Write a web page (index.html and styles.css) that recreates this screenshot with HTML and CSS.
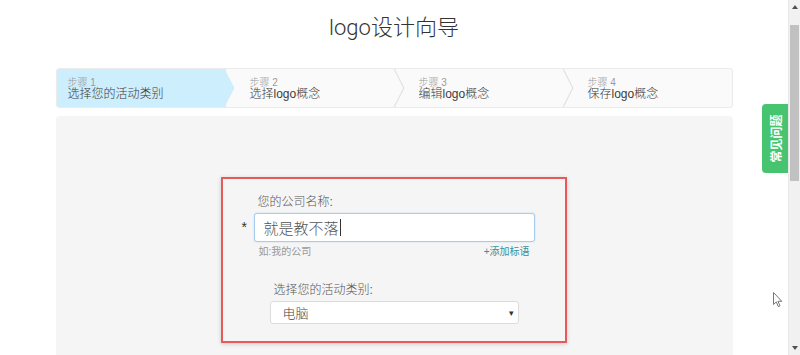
FILE: index.html
```html
<!DOCTYPE html>
<html lang="zh">
<head>
<meta charset="utf-8">
<title>logo设计向导</title>
<link rel="stylesheet" href="styles.css">
</head>
<body>
<div class="screen">
  <div class="page">
    <h1 class="title">logo设计向导</h1>
    <div class="container">
      <ol class="steps">
        <li class="step active"><span class="step-num">步骤 1</span><span class="step-name">选择您的活动类别</span></li>
        <li class="step"><span class="step-num">步骤 2</span><span class="step-name">选择logo概念</span></li>
        <li class="step"><span class="step-num">步骤 3</span><span class="step-name">编辑logo概念</span></li>
        <li class="step last"><span class="step-num">步骤 4</span><span class="step-name">保存logo概念</span></li>
      </ol>
      <div class="panel">
        <div class="form-box">
          <div class="field">
            <label class="field-label">您的公司名称:</label>
            <div class="input-row">
              <span class="required">*</span>
              <div class="input"><span class="input-text">就是教不落</span><span class="caret"></span></div>
            </div>
            <div class="hint-row">
              <span class="hint">如:我的公司</span>
              <span class="add-slogan">+添加标语</span>
            </div>
          </div>
          <div class="select-field">
            <label class="field-label">选择您的活动类别:</label>
            <div class="select"><span>电脑</span><span class="select-arrow">▾</span></div>
          </div>
        </div>
      </div>
    </div>
  </div>
  <div class="scrollbar">
    <span class="sb-arrow up"></span>
    <div class="sb-track"><div class="sb-thumb"></div></div>
    <span class="sb-arrow down"></span>
  </div>
</div>
<a class="faq-tab"><span class="faq-text">常见问题</span></a>
<svg class="cursor" width="10" height="16" viewBox="0 0 10 16"><path d="M0.5 0.5 L0.5 12.5 L3.3 9.9 L5.3 14.6 L7 13.9 L5 9.3 L8.8 9.3 Z" fill="#fff" stroke="#777" stroke-width="1"/></svg>
</body>
</html>
```

FILE: styles.css
```css
* { box-sizing: border-box; }
html, body { margin: 0; padding: 0; height: 355px; overflow: hidden; background: #fff; }
body { font-family: "Liberation Sans", "Noto Sans CJK SC", sans-serif; color: #333; }

.screen { display: flex; height: 355px; }
.page { flex: 1; min-width: 0; }

.title {
  margin: 0;
  padding-top: 14px;
  line-height: 28px;
  font-family: Roboto, "Noto Sans CJK SC", sans-serif;
  font-weight: 300;
  font-size: 22px;
  color: #333;
  text-align: center;
}

.container { width: 677px; margin: 26px auto 0; }

.steps {
  list-style: none;
  margin: 0;
  padding: 0;
  display: grid;
  grid-template-columns: 169px 169px 169px 1fr;
  height: 40px;
  border: 1px solid #ebebeb;
  border-radius: 3px;
  background: #fafafa;
  overflow: hidden;
}
.step {
  position: relative;
  display: flex;
  flex-direction: column;
  padding: 8px 0 0 24px;
}
.step.active { background: #cdeefd; padding-left: 11px; }
.step::after {
  content: "";
  position: absolute;
  top: 0;
  right: -10px;
  width: 11px;
  height: 100%;
  background: #e2e2e2;
  clip-path: polygon(0 0, 1.4px 0, 11px 50%, 1.4px 100%, 0 100%, 9.6px 50%);
  z-index: 1;
}
.step.active::after {
  background: #cdeefd;
  clip-path: polygon(0 0, 10px 50%, 0 100%);
}
.step.last::after { display: none; }
.step-num { font-size: 10px; line-height: 11px; color: #9a9a9a; font-weight: 300; }
.step-name { font-size: 12px; line-height: 13px; color: #3a3a3a; font-weight: 300; }

.panel {
  margin-top: 8px;
  height: 239px;
  background: #f5f5f5;
  border-radius: 4px 4px 0 0;
  padding-top: 61px;
}

.form-box {
  width: 346px;
  margin: 0 auto;
  border: 2px solid #e85a5a;
  background: #f5f5f5;
  box-shadow: 0 1px 4px rgba(0,0,0,0.18);
  padding: 15px 0 17px;
}

.field { width: 281px; margin: 0 auto; }
.field-label {
  display: block;
  font-size: 12px;
  line-height: 16px;
  color: #555;
  padding-left: 4px;
  font-weight: 300;
}
.input-row { display: flex; align-items: center; margin-top: 3px; }
.required {
  width: 12px;
  margin-left: -12px;
  font-size: 14px;
  color: #333;
  line-height: 29px;
}
.input {
  flex: 1;
  height: 29px;
  background: #fff;
  border: 1px solid #a6cdef;
  border-radius: 3px;
  box-shadow: 0 0 2px rgba(102,175,233,0.35);
  display: flex;
  align-items: center;
  padding-left: 9px;
  font-size: 15px;
  color: #555;
  font-weight: 300;
}
.caret { width: 1px; height: 17px; background: #333; margin-left: 1px; }
.hint-row {
  display: flex;
  justify-content: space-between;
  margin-top: 3px;
  padding: 0 5px;
  font-size: 10px;
  line-height: 14px;
}
.hint { color: #999; }
.add-slogan { color: #3b8f98; }

.select-field { width: 249px; margin: 23px auto 0; }
.select-field .field-label { padding-left: 4px; }
.select {
  margin-top: 3px;
  height: 23px;
  background: #fff;
  border: 1px solid #dcdcdc;
  border-radius: 3px;
  display: flex;
  align-items: center;
  justify-content: space-between;
  padding: 0 4px 0 12px;
  font-size: 13px;
  color: #444;
  font-weight: 300;
}
.select-arrow { font-size: 9px; color: #333; }

.scrollbar {
  width: 12px;
  height: 355px;
  background: #f1f1f1;
  border-left: 1px solid #e8e8e8;
  display: flex;
  flex-direction: column;
  align-items: center;
}
.sb-track { flex: 1; width: 100%; padding: 16px 1px 0 1px; }
.sb-thumb { height: 156px; background: #c1c1c1; }
.sb-arrow { width: 0; height: 0; border-left: 3px solid transparent; border-right: 3px solid transparent; }
.sb-arrow.up { margin-top: 5px; border-bottom: 4px solid #505050; }
.sb-arrow.down { margin-bottom: 5px; border-top: 4px solid #505050; }

.faq-tab {
  position: fixed;
  top: 104px;
  right: 12px;
  width: 26px;
  height: 69px;
  background: #46c46f;
  border-radius: 4px 0 0 4px;
  display: flex;
  align-items: center;
  justify-content: center;
}
.faq-text {
  display: block;
  transform: rotate(-90deg);
  white-space: nowrap;
  color: #fff;
  font-size: 12px;
  font-weight: bold;
  font-family: "Noto Sans CJK SC", sans-serif;
}

.cursor { position: fixed; left: 773px; top: 292px; }
```
